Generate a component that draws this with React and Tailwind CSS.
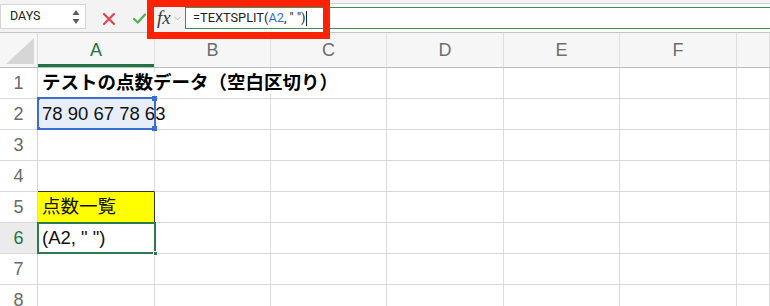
import React from "react";

const cols = [
  { k: "A", w: "w-[117px]" },
  { k: "B", w: "w-[116px]" },
  { k: "C", w: "w-[116px]" },
  { k: "D", w: "w-[117px]" },
  { k: "E", w: "w-[116px]" },
  { k: "F", w: "w-[117px]" },
  { k: "G", w: "flex-1" },
];

const font = { fontFamily: '"Liberation Sans", "Noto Sans CJK JP", sans-serif' };

function Row({ n, children, selected }) {
  return (
    <div className="flex h-[31px] border-b border-[#d9d9d9]">
      <div
        className={
          "w-[38px] shrink-0 border-r border-[#d4d4d4] flex items-center justify-center text-[18px] " +
          (selected ? "bg-[#ebebeb] text-[#217346]" : "bg-white text-[#6a6a6a]")
        }
      >
        {n}
      </div>
      {children}
    </div>
  );
}

function Cell({ w, className = "", children }) {
  return (
    <div className={`${w} shrink-0 border-r border-[#dcdcdc] flex items-center ${className}`}>
      {children}
    </div>
  );
}

function EmptyCells({ from = 1 }) {
  return cols.slice(from).map((c) => <Cell key={c.k} w={c.w} />);
}

export default function App() {
  return (
    <div className="relative w-[770px] h-[306px] overflow-hidden bg-white" style={font}>
      {/* Toolbar */}
      <div className="flex h-[33px] items-start bg-[#f3f3f3] border-b border-[#c6c6c6]">
        <div className="mt-[4px] w-[86px] h-[25px] bg-white border border-[#d6d6d6] flex items-center justify-between pl-[9px] pr-[4px]">
          <span className="text-[12.5px] text-[#222]" style={{ fontFamily: "Roboto, sans-serif" }}>DAYS</span>
          <svg width="10" height="18" viewBox="0 0 10 18">
            <path d="M5 2 L8.5 7 L1.5 7 Z" fill="#5a5a5a" />
            <path d="M5 16 L8.5 11 L1.5 11 Z" fill="#5a5a5a" />
          </svg>
        </div>
        <div className="w-[68px] h-[32px] flex items-center justify-center gap-[18px] pt-[5px] pl-[8px]">
          <svg width="12" height="12" viewBox="0 0 12 12">
            <path d="M1 1 L11 11 M11 1 L1 11" stroke="#e0474c" strokeWidth="2.2" strokeLinecap="round" />
          </svg>
          <svg width="13" height="11" viewBox="0 0 13 11">
            <path d="M1 6 L4.8 9.5 L12 1.5" stroke="#4fae4f" strokeWidth="2.2" fill="none" strokeLinecap="round" strokeLinejoin="round" />
          </svg>
        </div>
        <div className="w-[31px] h-[32px] flex items-center pl-[3px] pt-[5px] gap-[3px]">
          <span className="text-[19px] italic text-[#3a3a3a]" style={{ fontFamily: '"Liberation Serif", serif' }}>fx</span>
          <svg width="7" height="5" viewBox="0 0 7 5">
            <path d="M0.5 0.8 L3.5 3.8 L6.5 0.8" stroke="#b8b8b8" strokeWidth="1" fill="none" />
          </svg>
        </div>
        <div className="flex-1 mt-[3px] h-[29px] bg-white border-t border-[#cfcfcf] pt-[3px]">
          <div className="h-[22px] border-y border-l border-[#3f8f5a] bg-white flex items-center pl-[7px]">
            <span className="text-[12.8px] text-[#222]" style={{ fontFamily: "Roboto, sans-serif" }}>
              =TEXTSPLIT(<span className="text-[#2f6fd0]">A2</span>, " ")
            </span>
            <span className="ml-[1px] w-px h-[15px] bg-[#222]" />
          </div>
        </div>
      </div>

      {/* Column header */}
      <div className="flex h-[35px] bg-[#f6f6f6] border-b border-[#bdbdbd]">
        <div className="w-[38px] shrink-0 border-r border-[#dcdcdc] flex items-end justify-end pr-[3px] pb-[3px]">
          <svg width="28" height="26" viewBox="0 0 28 26">
            <path d="M28 0 L28 26 L0 26 Z" fill="#d6d6d6" />
          </svg>
        </div>
        {cols.map((c) => (
          <div
            key={c.k}
            className={
              `${c.w} shrink-0 border-r border-[#e0e0e0] flex items-center justify-center text-[18px] ` +
              (c.k === "A" ? "text-[#217346] shadow-[inset_0_-3px_0_#217346]" : "text-[#6e6e6e]")
            }
          >
            {c.k === "G" ? "" : c.k}
          </div>
        ))}
      </div>

      {/* Rows */}
      <Row n={1}>
        <Cell w={cols[0].w} className="overflow-visible">
          <span className="relative pl-[4px] pr-[2px] whitespace-nowrap text-[18.5px] leading-[22px] font-bold text-black bg-white">
            テストの点数データ（空白区切り）
          </span>
        </Cell>
        <EmptyCells />
      </Row>
      <Row n={2}>
        <Cell w={cols[0].w} className="bg-[#e8eef9] overflow-visible">
          <span className="relative pl-[4px] whitespace-nowrap text-[18.5px] text-[#111]">78 90 67 78 63</span>
        </Cell>
        <EmptyCells />
      </Row>
      <Row n={3}>
        <EmptyCells from={0} />
      </Row>
      <Row n={4}>
        <Cell w={cols[0].w} className="-mb-px border-b border-b-[#333]" />
        <EmptyCells />
      </Row>
      <Row n={5}>
        <Cell w={cols[0].w} className="bg-[#ffff00] border-r-[#333]">
          <span className="pl-[4px] whitespace-nowrap text-[18.5px] text-[#111]">点数一覧</span>
        </Cell>
        <EmptyCells />
      </Row>
      <Row n={6} selected>
        <Cell w={cols[0].w}>
          <span className="pl-[4px] whitespace-nowrap text-[18.5px] text-[#111]">(A2, " ")</span>
        </Cell>
        <EmptyCells />
      </Row>
      <Row n={7}>
        <EmptyCells from={0} />
      </Row>
      <Row n={8}>
        <EmptyCells from={0} />
      </Row>

      {/* A2 selection overlay */}
      <div className="absolute left-[37px] top-[97px] w-[119px] h-[33px] border-2 border-[#3a6fd0] pointer-events-none">
        <div className="absolute -left-[2px] -top-[2px] w-[3px] h-[3px] bg-[#3a6fd0]" />
        <div className="absolute -right-[3px] -top-[3px] w-[5px] h-[5px] bg-[#3a6fd0]" />
        <div className="absolute -left-[2px] -bottom-[2px] w-[3px] h-[3px] bg-[#3a6fd0]" />
        <div className="absolute -right-[3px] -bottom-[3px] w-[5px] h-[5px] bg-[#3a6fd0]" />
      </div>

      {/* A6 active cell */}
      <div className="absolute left-[37px] top-[222px] w-[119px] h-[32px] border-2 border-[#2e7a4f] pointer-events-none">
        <div className="absolute -right-[4px] -bottom-[4px] w-[5px] h-[5px] bg-[#2e7a4f] border border-white" />
      </div>

      {/* Red highlight box */}
      <div className="absolute left-[147px] top-0 w-[183px] h-[39px] border-[7px] border-[#fe2200] pointer-events-none" />
    </div>
  );
}
